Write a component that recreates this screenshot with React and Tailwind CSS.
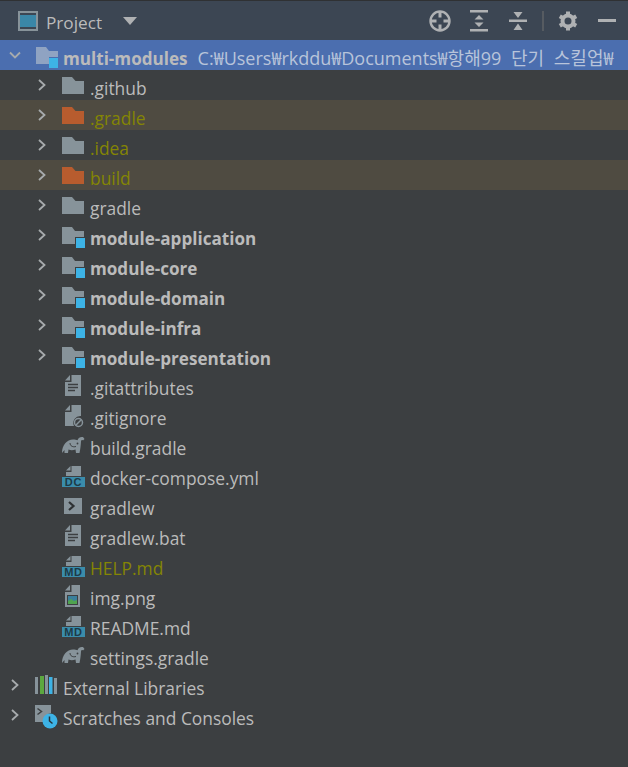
const FONT = "font-['Open_Sans','Noto_Sans_CJK_KR',sans-serif]"

const Folder = ({ color = "#87939a" }) => (
  <svg width="24" height="24" viewBox="0 0 24 24" className="overflow-visible">
    <path d="M0 4h10l3.500 4H22v13H0z" fill={color} />
  </svg>
)

const ModuleFolder = () => (
  <svg width="24" height="24" viewBox="0 0 24 24" className="overflow-visible">
    <path d="M0 4h10l3 4h9v6H13v7H0z" fill="#87939a" />
    <rect x="14" y="15" width="9" height="10" fill="#3db3e6" />
  </svg>
)

const FileBase = ({ children }) => (
  <svg width="24" height="24" viewBox="0 0 24 24" className="overflow-visible">
    <path d="M9.500 2H19v21H3V9h6.500z" fill="#87939a" />
    <path d="M3 7.500 8 2v5.500z" fill="#87939a" />
    {children}
  </svg>
)

const TextFile = () => (
  <FileBase>
    <path d="M6 11.500h10M6 14.500h10M6 17.500h7" stroke="#3c3f41" strokeWidth="1.300" />
  </FileBase>
)

const IgnoreFile = () => (
  <svg width="24" height="24" viewBox="0 0 24 24" className="overflow-visible">
    <path d="M9.500 2H19v11a7 7 0 0 0-7 10H3V9h6.500z" fill="#87939a" />
    <path d="M3 7.500 8 2v5.500z" fill="#87939a" />
    <circle cx="16.500" cy="19.500" r="4" fill="none" stroke="#87939a" strokeWidth="1.500" />
    <path d="M13.800 22.200 19.200 16.800" stroke="#87939a" strokeWidth="1.500" />
  </svg>
)

const Elephant = () => (
  <svg width="24" height="24" viewBox="0 0 24 24" className="overflow-visible">
    <path
      d="M0 20C0 12 5 6.500 11 6.500c2 0 3.500.7 4.500.7C16.500 4.500 18.500 3.500 21 4l1.500 2L21 7.500c-.8-.8-1.800-.5-2 .8-.2 3.500-.5 7-1.500 11.700H14l-.5-3.500c-2.500 1-5 1-7 0L6 20H2.500v-3z"
      fill="#87939a"
    />
    <path d="M8 10c0 3 3 4.500 6 3.500" fill="none" stroke="#3c3f41" strokeWidth="1" />
    <circle cx="15.500" cy="10.500" r=".9" fill="#3c3f41" />
  </svg>
)

const BandFile = ({ label }) => (
  <svg width="24" height="24" viewBox="0 0 24 24" className="overflow-visible">
    <path d="M9.500 3H19v10H4V9h5.500z" fill="#87939a" />
    <path d="M4 7.500 8.500 3v4.500z" fill="#87939a" />
    <rect x="0" y="14" width="23" height="10" fill="#3a8cab" />
    <text x="11.500" y="23" textAnchor="middle" fontSize="11" fontWeight="700" letterSpacing=".8" fill="#1d3a47" fontFamily="Liberation Sans">
      {label}
    </text>
  </svg>
)

const Shell = () => (
  <svg width="24" height="24" viewBox="0 0 24 24" className="overflow-visible">
    <rect x="2" y="5" width="18" height="16" fill="#87939a" />
    <path d="M7 9l4.500 4L7 17" fill="none" stroke="#2f3234" strokeWidth="2.200" />
  </svg>
)

const ImageFile = () => (
  <svg width="24" height="24" viewBox="0 0 24 24" className="overflow-visible">
    <path d="M9.500 2H18v22H3V9h6.500z" fill="#87939a" />
    <path d="M3 7.500 8 2v5.500z" fill="#87939a" />
    <rect x="5" y="12" width="11" height="10" fill="#3c3f41" />
    <rect x="6" y="13" width="9" height="8" fill="#3a7f9b" />
    <path d="M6 21v-3l3-2 3 2 3-1v4z" fill="#4fa34f" />
  </svg>
)

const Libraries = () => (
  <svg width="24" height="24" viewBox="0 0 24 24" className="overflow-visible">
    <rect x="0" y="4" width="3" height="17" fill="#87939a" />
    <rect x="5" y="3" width="4" height="18" fill="#5ca83f" />
    <rect x="10" y="2" width="3" height="19" fill="#87939a" />
    <rect x="14" y="4" width="3.500" height="17" fill="#3db3e6" />
    <rect x="19" y="5" width="3" height="16" fill="#87939a" />
  </svg>
)

const Scratches = () => (
  <svg width="24" height="24" viewBox="0 0 24 24" className="overflow-visible">
    <path d="M0 2h16v8a8.500 8.500 0 0 0-7 9H0z" fill="#87939a" />
    <path d="M2.500 5.500l4 3-4 3" fill="none" stroke="#3c3f41" strokeWidth="1.500" />
    <circle cx="15" cy="18" r="7.500" fill="#3db3e6" />
    <path d="M14.500 13.500V18l3 2.500" fill="none" stroke="#24323a" strokeWidth="1.500" />
  </svg>
)

const Chevron = ({ open }) => (
  <svg width="14" height="14" viewBox="0 0 14 14" fill="none" stroke="#a7abad" strokeWidth="1.800">
    <path d={open ? "M2 4.500l5 5 5-5" : "M4 2l5.500 5L4 12"} />
  </svg>
)

const rows = [
  { name: ".github", icon: <Folder />, arrow: true },
  { name: ".gradle", icon: <Folder color="#b85c2e" />, arrow: true, ignored: true, band: true },
  { name: ".idea", icon: <Folder />, arrow: true, ignored: true },
  { name: "build", icon: <Folder color="#b85c2e" />, arrow: true, ignored: true, band: true },
  { name: "gradle", icon: <Folder />, arrow: true },
  { name: "module-application", icon: <ModuleFolder />, arrow: true, bold: true },
  { name: "module-core", icon: <ModuleFolder />, arrow: true, bold: true },
  { name: "module-domain", icon: <ModuleFolder />, arrow: true, bold: true },
  { name: "module-infra", icon: <ModuleFolder />, arrow: true, bold: true },
  { name: "module-presentation", icon: <ModuleFolder />, arrow: true, bold: true },
  { name: ".gitattributes", icon: <TextFile /> },
  { name: ".gitignore", icon: <IgnoreFile /> },
  { name: "build.gradle", icon: <Elephant /> },
  { name: "docker-compose.yml", icon: <BandFile label="DC" /> },
  { name: "gradlew", icon: <Shell /> },
  { name: "gradlew.bat", icon: <TextFile /> },
  { name: "HELP.md", icon: <BandFile label="MD" />, ignored: true },
  { name: "img.png", icon: <ImageFile /> },
  { name: "README.md", icon: <BandFile label="MD" /> },
  { name: "settings.gradle", icon: <Elephant /> },
]

function Row({ row, depth = 1 }) {
  return (
    <div className={`flex h-[30px] items-center whitespace-nowrap ${row.band ? "bg-[#4f4b41]" : ""}`}>
      <div className={`flex w-[27px] shrink-0 justify-start ${depth === 1 ? "ml-[35px]" : "ml-[8px]"}`}>
        {row.arrow && <Chevron />}
      </div>
      <div className="w-[28px] shrink-0">{row.icon}</div>
      <span
        className={`${row.bold ? "pt-[8px] text-[17.1px] font-bold" : "pt-[6px] text-[17.4px]"} ${
          row.ignored ? "text-[#848504]" : "text-[#bbbbbb]"
        }`}
      >
        {row.name}
      </span>
    </div>
  )
}

export default function App() {
  return (
    <div className={`flex h-[767px] w-[628px] flex-col overflow-hidden bg-[#3c3f41] ${FONT}`}>
      {/* Tool window header */}
      <div className="flex h-10 shrink-0 items-center border-t border-[#2f3133] bg-[#3c4653]">
        <div className="ml-[18px] flex h-5 w-5 items-center justify-center border-2 border-[#87939a]">
          <div className="h-[12px] w-[16px] bg-[#3a87a8]" />
        </div>
        <span className="ml-2 pt-1 text-[17.2px] text-[#bbbbbb]">Project</span>
        <div className="ml-[21px] h-0 w-0 border-x-[7px] border-t-[8px] border-x-transparent border-t-[#afb1b3]" />

        <div className="ml-auto flex items-center pr-[9px]">
          <svg width="24" height="24" viewBox="0 0 24 24" fill="none" stroke="#afb1b3" strokeWidth="2.400">
            <circle cx="12" cy="12" r="9.500" />
            <path d="M12 2.500v6M12 15.500v6M2.500 12h6M15.500 12h6" strokeWidth="3" />
          </svg>
          <svg className="ml-[15px]" width="24" height="24" viewBox="0 0 24 24" fill="#afb1b3">
            <rect x="3" y="1" width="18" height="2.500" />
            <rect x="3" y="20" width="18" height="2.500" />
            <path d="M12 6l4.500 4.500h-9zM12 18l4.500-4.500h-9z" />
          </svg>
          <svg className="ml-[15px]" width="24" height="24" viewBox="0 0 24 24" fill="#afb1b3">
            <rect x="3" y="10.500" width="18" height="2.500" />
            <path d="M12 9 7.500 3h9zM12 14.500l4.500 6.500h-9z" />
          </svg>
          <div className="ml-3 h-5 w-0.5 bg-[#565b61]" />
          <svg className="ml-3" width="24" height="24" viewBox="0 0 24 24" fill="none" stroke="#afb1b3">
            <circle cx="12" cy="12" r="5.500" strokeWidth="4" />
            <path d="M12 2.500v19M3.800 7.250l16.400 9.500M3.800 16.750l16.400-9.500" strokeWidth="4" strokeDasharray="3.500 12" />
          </svg>
          <div className="ml-[15px] flex w-6 justify-center">
            <div className="h-[3px] w-[18px] bg-[#afb1b3]" />
          </div>
        </div>
      </div>

      {/* Project root row */}
      <div className="flex h-[30px] shrink-0 items-center overflow-hidden whitespace-nowrap bg-[#4b6eaf]">
        <div className="ml-[8px] flex w-[27px] shrink-0 justify-start">
          <Chevron open />
        </div>
        <div className="ml-px w-[27px] shrink-0">
          <svg width="24" height="24" viewBox="0 0 24 24" className="overflow-visible">
            <path d="M0 4h10l3 4h9v6H13v7H0z" fill="#8fa3c2" />
            <rect x="13" y="15" width="9" height="10" fill="#3db3e6" />
          </svg>
        </div>
        <span className="pt-[8px] text-[17.1px] font-bold text-[#bbbbbb]">multi-modules</span>
        <span className="ml-[10px] pt-[6px] text-[18px] text-[#b8c4da] [word-spacing:5px]">
          C:₩Users₩rkddu₩Documents₩항해99 단기 스킬업₩
        </span>
      </div>

      {rows.map((row) => (
        <Row key={row.name} row={row} />
      ))}
      <Row depth={0} row={{ name: "External Libraries", icon: <Libraries />, arrow: true }} />
      <Row depth={0} row={{ name: "Scratches and Consoles", icon: <Scratches />, arrow: true }} />
    </div>
  )
}
